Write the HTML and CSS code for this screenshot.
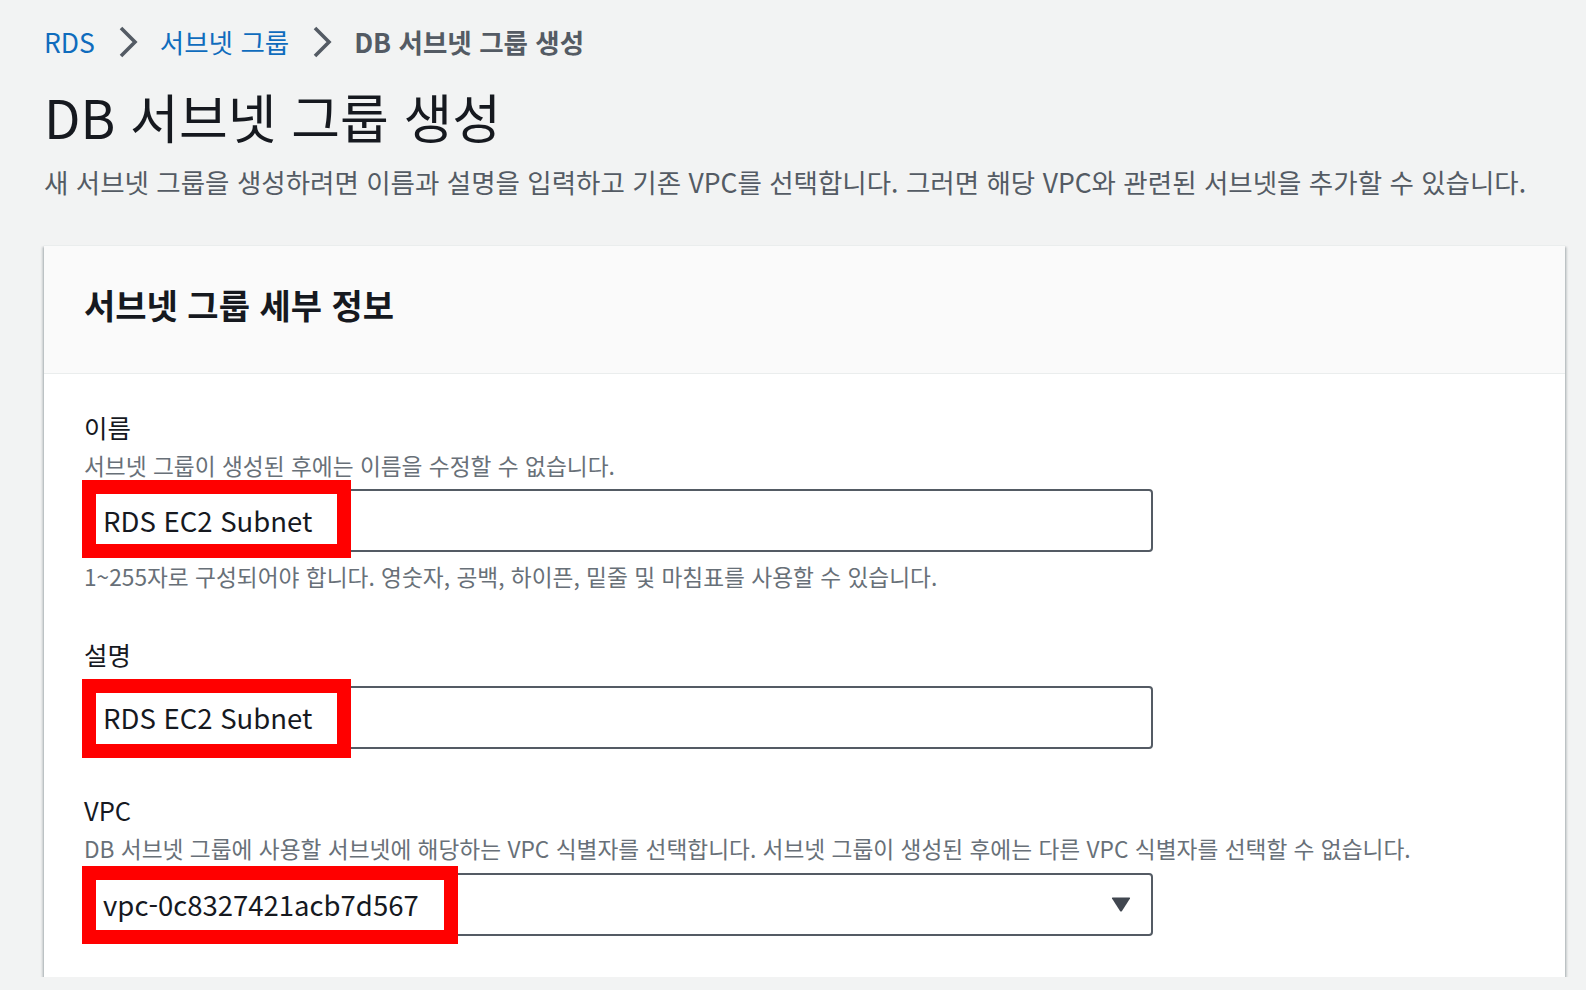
FILE: index.html
```html
<!DOCTYPE html>
<html lang="ko">
<head>
<meta charset="utf-8">
<title>DB 서브넷 그룹 생성</title>
<link rel="stylesheet" href="styles.css">
</head>
<body>
<div class="page">
  <nav class="crumbs">
    <a class="crumb-link" href="#">RDS</a>
    <span class="chev"><svg width="20" height="32" viewBox="0 0 20 32"><polyline points="3,2 17,16 3,30" fill="none" stroke="#545b64" stroke-width="3.6"/></svg></span>
    <a class="crumb-link" href="#">서브넷 그룹</a>
    <span class="chev"><svg width="20" height="32" viewBox="0 0 20 32"><polyline points="3,2 17,16 3,30" fill="none" stroke="#545b64" stroke-width="3.6"/></svg></span>
    <span class="crumb-current">DB 서브넷 그룹 생성</span>
  </nav>
  <h1 class="title">DB 서브넷 그룹 생성</h1>
  <p class="intro">새 서브넷 그룹을 생성하려면 이름과 설명을 입력하고 기존 VPC를 선택합니다. 그러면 해당 VPC와 관련된 서브넷을 추가할 수 있습니다.</p>

  <section class="card">
    <header class="card-head">
      <h2 class="card-title">서브넷 그룹 세부 정보</h2>
    </header>
    <div class="card-body">
      <div class="field field-name">
        <div class="label">이름</div>
        <div class="desc">서브넷 그룹이 생성된 후에는 이름을 수정할 수 없습니다.</div>
        <div class="control">
          <div class="input">RDS EC2 Subnet</div>
          <span class="mark mark-1"></span>
        </div>
        <div class="hint">1~255자로 구성되어야 합니다. 영숫자, 공백, 하이픈, 밑줄 및 마침표를 사용할 수 있습니다.</div>
      </div>

      <div class="field field-desc">
        <div class="label">설명</div>
        <div class="control control-nodesc">
          <div class="input">RDS EC2 Subnet</div>
          <span class="mark mark-2"></span>
        </div>
      </div>

      <div class="field field-vpc">
        <div class="label">VPC</div>
        <div class="desc">DB 서브넷 그룹에 사용할 서브넷에 해당하는 VPC 식별자를 선택합니다. 서브넷 그룹이 생성된 후에는 다른 VPC 식별자를 선택할 수 없습니다.</div>
        <div class="control control-select">
          <div class="input select">
            <span class="select-value">vpc-0c8327421acb7d567</span>
            <svg class="caret" width="20" height="15" viewBox="0 0 20 15"><path d="M1 1.5 Q0.5 0.5 1.8 0.5 L18.2 0.5 Q19.5 0.5 19 1.5 L11 14 Q10 15 9 14 Z" fill="#414750"/></svg>
          </div>
          <span class="mark mark-3"></span>
        </div>
      </div>
    </div>
  </section>
</div>
</body>
</html>
```

FILE: styles.css
```css
html, body {
  margin: 0;
  padding: 0;
}

body {
  background: #f2f3f3;
  font-family: "Noto Sans CJK KR", "Noto Sans", sans-serif;
  color: #16191f;
}

.page {
  padding: 24px 21px 0 44px;
}

.crumbs {
  display: flex;
  align-items: center;
  height: 36px;
  font-size: 26.5px;
  line-height: 36px;
}

.crumb-link {
  color: #0f6cbd;
  text-decoration: none;
}

.chev {
  display: flex;
  align-items: center;
  margin: 0 22px 0 23px;
}

.crumb-current {
  color: #545b64;
  font-weight: 700;
}

.title {
  margin: 26px 0 0;
  font-size: 53px;
  font-weight: 400;
  line-height: 60px;
  color: #16191f;
}

.intro {
  margin: 18px 0 0;
  font-size: 26.5px;
  line-height: 36px;
  color: #545b64;
}

.card {
  margin-top: 45px;
  background: #ffffff;
  border-top: 1px solid #eaeded;
  box-shadow: 0 2px 2px 0 rgba(0, 28, 36, 0.3), 2px 2px 2px 0 rgba(0, 28, 36, 0.15), -2px 2px 2px 0 rgba(0, 28, 36, 0.15);
}

.card-head {
  background: #fafafa;
  padding: 37px 40px 46px;
  border-bottom: 1px solid #eaeded;
}

.card-title {
  margin: 0;
  font-size: 34px;
  font-weight: 700;
  line-height: 44px;
  color: #16191f;
}

.card-body {
  padding: 33px 40px 41px;
  display: flex;
  flex-direction: column;
}

.field-desc {
  margin-top: 38px;
}

.field-vpc {
  margin-top: 41px;
}

.label {
  font-size: 25.5px;
  line-height: 40px;
  color: #16191f;
}

.desc {
  font-size: 22.7px;
  line-height: 38px;
  color: #687078;
}

.hint {
  margin-top: 6px;
  font-size: 22.7px;
  line-height: 38px;
  color: #687078;
}

.control {
  position: relative;
  width: 1069px;
  margin-top: 4px;
}

.control-nodesc {
  margin-top: 12px;
}

.control-select {
  margin-top: 5px;
}

.input {
  box-sizing: border-box;
  height: 63px;
  border: 2px solid #545b64;
  border-radius: 4px;
  background: #ffffff;
  padding: 0 17px;
  font-size: 27.5px;
  line-height: 59px;
  color: #16191f;
  white-space: nowrap;
}

.select {
  display: flex;
  align-items: center;
  justify-content: space-between;
  padding-right: 20px;
}

.caret {
  display: block;
}

.mark {
  position: absolute;
  left: -2px;
  box-sizing: border-box;
  border: 14px solid #ff0000;
  pointer-events: none;
}

.mark-1 {
  top: -9px;
  width: 269px;
  height: 78px;
}

.mark-2 {
  top: -7px;
  width: 269px;
  height: 79px;
}

.mark-3 {
  top: -7px;
  width: 376px;
  height: 78px;
}
```
